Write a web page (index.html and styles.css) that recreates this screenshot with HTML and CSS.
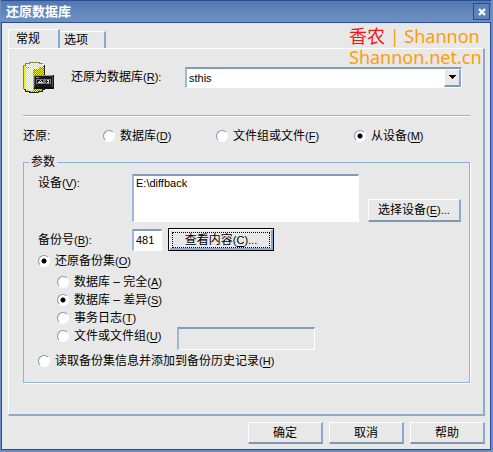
FILE: index.html
```html
<!DOCTYPE html>
<html lang="zh-CN">
<head>
  <meta charset="UTF-8">
  <meta name="viewport" content="width=device-width, initial-scale=1.0">
  <title>还原数据库</title>
  <link rel="stylesheet" href="styles.css">
</head>
<body>
  <div class="window">
    <div class="titlebar">
      <h1>还原数据库</h1>
      <button type="button" class="close" aria-label="关闭">
        <svg width="8" height="8" viewBox="0 0 8 8"><path d="M1 1l6 6M7 1L1 7" stroke="#fff" stroke-width="2.2"/></svg>
      </button>
    </div>

    <form class="client">
      <div class="watermark"><span class="red">香农</span> | Shannon<br>Shannon.net.cn</div>

      <div class="tabs">
        <button type="button" class="tab active">常规</button>
        <button type="button" class="tab">选项</button>
      </div>

      <div class="panel">
        <!-- Target database -->
        <div class="row target">
          <svg class="db-icon" width="32" height="32" viewBox="1 0 32 32" shape-rendering="crispEdges">
            <defs>
              <pattern id="dither" width="2" height="2" patternUnits="userSpaceOnUse">
                <rect width="2" height="2" fill="#f2ee30"/>
                <rect width="1" height="1" fill="#8c8a10"/>
                <rect x="1" y="1" width="1" height="1" fill="#8c8a10"/>
              </pattern>
              <pattern id="light" width="2" height="2" patternUnits="userSpaceOnUse">
                <rect width="2" height="2" fill="#fffff0"/>
                <rect width="1" height="1" fill="#ecea20"/>
                <rect x="1" y="1" width="1" height="1" fill="#ecea20"/>
              </pattern>
            </defs>
            <path d="M1 4h2V2h4V1h10v1h4v2h2v24h-3v2h-4v1H7v-1H3v-2H1z" fill="url(#dither)"/>
            <path d="M2 6h2v22H2z" fill="#f4f010"/>
            <path d="M4 7h7v23H7v-1H4z" fill="url(#light)"/>
            <path d="M3 3h4V2h10v1h4v3h-4v2H7V6H3z" fill="url(#light)"/>
            <path d="M1 28V4h2V2h4V1h10v1h4" fill="none" stroke="#85834a"/>
            <path d="M22 4v10M2 28h1v2h4v1h9v-1h4v-2h2v-1" fill="none" stroke="#222"/>
            <path d="M12 14h20v14H12z" fill="#111"/>
            <path d="M12 14h19v12H12z" fill="#555"/>
            <path d="M13 15h17v11H13z" fill="#161a1c"/>
            <path d="M12 14h18v1H12z" fill="#999"/>
            <path d="M14 16h3v1h-3z" fill="#4ab5b5"/>
            <path d="M14 18h15v5H14z" fill="#777"/>
            <path d="M15 19h13v3H15z" fill="#16191a"/>
            <path d="M16 21h1v-1h1v-1h1v1h1v1h1v1h-5zM25 19h2v3h-2z" fill="#ddd"/>
            <path d="M18 20h1v1h-1zM25 20h1v1h-1z" fill="#111"/>
            <path d="M21 19h3v3h-3z" fill="#777"/>
          </svg>
          <label for="database">还原为数据库<span class="key">(<u>R</u>):</span></label>
          <div class="combo">
            <select id="database"><option>sthis</option></select>
            <span class="arrow"><svg width="7" height="4" viewBox="0 0 7 4" shape-rendering="crispEdges"><path d="M0 0h7v1H6v1H5v1H4v1H3V3H2V2H1V1H0z"/></svg></span>
          </div>
        </div>

        <hr>

        <!-- Restore source -->
        <div class="source" role="radiogroup" aria-labelledby="sourceLabel">
          <span id="sourceLabel">还原:</span>
          <label class="radio"><input type="radio" name="source"><span>数据库<span class="key">(<u>D</u>)</span></span></label>
          <label class="radio"><input type="radio" name="source"><span>文件组或文件<span class="key">(<u>F</u>)</span></span></label>
          <label class="radio"><input type="radio" name="source" checked><span>从设备<span class="key">(<u>M</u>)</span></span></label>
        </div>

        <fieldset>
          <legend>参数</legend>
          <div class="row device">
            <label for="device">设备<span class="key">(<u>V</u>):</span></label>
            <textarea id="device" readonly>E:\diffback</textarea>
            <button type="button" class="btn">选择设备<span class="key">(<u>E</u>)...</span></button>
          </div>
          <div class="row number">
            <label for="backupNo">备份号<span class="key">(<u>B</u>):</span></label>
            <input type="text" id="backupNo" class="field" value="481">
            <button type="button" class="btn default"><span class="focus">查看内容<span class="key">(<u>C</u>)...</span></span></button>
          </div>

          <label class="radio"><input type="radio" name="action" checked><span>还原备份集<span class="key">(<u>O</u>)</span></span></label>
          <div class="sets">
            <label class="radio"><input type="radio" name="set"><span>数据库 – 完全<span class="key">(<u>A</u>)</span></span></label>
            <label class="radio"><input type="radio" name="set" checked><span>数据库 – 差异<span class="key">(<u>S</u>)</span></span></label>
            <label class="radio"><input type="radio" name="set"><span>事务日志<span class="key">(<u>T</u>)</span></span></label>
            <div class="row files">
              <label class="radio"><input type="radio" name="set"><span>文件或文件组<span class="key">(<u>U</u>)</span></span></label>
              <input type="text" class="field" aria-label="文件或文件组" disabled>
            </div>
          </div>
          <label class="radio"><input type="radio" name="action"><span>读取备份集信息并添加到备份历史记录<span class="key">(<u>H</u>)</span></span></label>
        </fieldset>
      </div>

      <div class="actions">
        <button type="button" class="btn">确定</button>
        <button type="button" class="btn">取消</button>
        <button type="button" class="btn">帮助</button>
      </div>
    </form>
  </div>
</body>
</html>
```
FILE: styles.css
```css
* {
  box-sizing: border-box;
}
body {
  margin: 0;
  font-family: "Liberation Sans", "Noto Sans CJK SC", sans-serif;
  font-size: 12px;
  line-height: 18px;
  color: #000;
}
button, input, select, textarea {
  margin: 0;
  font: inherit;
  color: inherit;
  border-radius: 0;
}
.window {
  display: flex;
  flex-direction: column;
  min-height: 100vh;
  border: solid #6b8fc4;
  border-width: 0 2px 2px 1px;
  background-color: #e8e8e8;
}
.titlebar {
  display: flex;
  align-items: center;
  justify-content: space-between;
  height: 23px;
  padding: 0 1px 0 5px;
  border-top: 1px solid #2b4f94;
  border-bottom: 1px solid #2a4b96;
  background: linear-gradient(#5478b2, #6e93c2);
}
.titlebar h1 {
  margin: 0;
  font-size: 13px;
  font-weight: bold;
  color: #fff;
}
.close {
  display: flex;
  align-items: center;
  justify-content: center;
  width: 17px;
  height: 17px;
  padding: 0;
  border: 1px solid #264c94;
  background-color: #5d82b8;
}
.client {
  position: relative;
  flex: 1;
  display: flex;
  flex-direction: column;
  padding: 6px 5px 5px 6px;
  border: solid #2a4b96;
  border-width: 0 1px 1px;
}
.watermark {
  position: absolute;
  top: 3px;
  right: 7px;
  font-family: "Noto Sans", "Noto Sans CJK SC", sans-serif;
  font-size: 18px;
  line-height: 21px;
  width: 134px;
  white-space: nowrap;
  color: #ff9c0a;
  pointer-events: none;
}
.watermark .red {
  color: #f81414;
}

/* Tabs and the page under them */
.tabs {
  display: flex;
  align-items: flex-end;
}
.tab {
  height: 17px;
  padding: 0 16px 0 4px;
  border: solid #fff;
  border-width: 1px 2px 0 0;
  border-right-color: #86a9d4;
  background-color: #e8e8e8;
  line-height: 16px;
}
.tab.active {
  height: 20px;
  margin-bottom: -1px;
  padding: 0 18px 2px 7px;
  border-left: 1px solid #fff;
  border-radius: 2px 0 0 0;
}
.panel {
  flex: 1;
  padding: 12px 13px 31px 14px;
  border: solid #fff;
  border-width: 1px 2px 2px 1px;
  border-right-color: #8faac8;
  border-bottom-color: #8faac8;
}
.row {
  display: flex;
  align-items: center;
}
.key {
  font-size: 11px;
}
u {
  text-underline-offset: 2px;
}
.target {
  padding-right: 8px;
}
.target label {
  width: 114px;
  margin-left: 16px;
}
.db-icon {
  flex: none;
}
.combo {
  position: relative;
  flex: 1;
}
select, textarea, .field {
  border: 1px solid #fff;
  border-top: 2px solid #819bb9;
  border-left: 2px solid #9bb8dc;
  background-color: #fff;
  font-size: 11px;
}
select {
  appearance: none;
  display: block;
  width: 100%;
  height: 21px;
  padding: 0 20px 0 2px;
}
.arrow {
  position: absolute;
  top: 2px;
  right: 1px;
  display: flex;
  align-items: center;
  justify-content: center;
  width: 17px;
  height: 18px;
  border: solid #fff;
  border-width: 1px 2px 2px 1px;
  border-right-color: #86a9d4;
  border-bottom-color: #7f98b5;
  background-color: #e8e8e8;
  pointer-events: none;
}
hr {
  margin: 22px 0 10px;
  border: 0;
  border-top: 1px solid #8fb2da;
  border-bottom: 1px solid #fff;
}
.source {
  display: grid;
  grid-template-columns: 80px 113px 138px auto;
  align-items: center;
}

/* Radio buttons */
.radio {
  display: flex;
  align-items: center;
  gap: 5px;
}
.radio input {
  appearance: none;
  flex: none;
  width: 12px;
  height: 12px;
  border: 1px solid #fff;
  border-top-color: #8098b4;
  border-left-color: #8098b4;
  border-radius: 50%;
  background-color: #fff;
}
.radio input:checked {
  background-image: radial-gradient(circle, #000 2px, transparent 3px);
}

fieldset {
  margin: 8px 0 0;
  padding: 3px 8px 12px 14px;
  border: 1px solid #8fb2da;
  box-shadow: 1px 1px #fff;
}
legend {
  margin-left: -9px;
  padding: 0 2px;
}
.device {
  align-items: flex-start;
}
.device label, .number label {
  width: 94px;
}
.device .btn {
  align-self: flex-end;
  width: 93px;
  margin-left: 9px;
}
textarea {
  flex: 1;
  min-width: 0;
  height: 48px;
  padding: 0 2px;
  line-height: 14px;
  resize: none;
}
.number {
  margin: 6px 0 1px;
}
.field {
  width: 30px;
  height: 22px;
  padding: 0 2px;
}
.files {
  align-items: flex-start;
}
.field:disabled {
  flex: 0 1 138px;
  height: 23px;
  margin-left: 16px;
  background-color: #e8e8e8;
}
.sets {
  margin: 3px 0 2px 19px;
}
.btn {
  height: 23px;
  padding: 0;
  border: solid #fff;
  border-width: 1px 2px 2px 1px;
  border-right-color: #86a9d4;
  border-bottom-color: #8097b2;
  background-color: #e8e8e8;
  line-height: 18px;
}
.btn.default {
  width: 106px;
  margin-left: 6px;
  padding: 2px;
  border-width: 1px;
  border-color: #000;
  box-shadow: inset 1px 1px #fff, inset -2px -2px #86a9d4;
}
.focus {
  display: block;
  height: 16px;
  margin: 0 1px;
  border: 1px dotted #000;
  line-height: 15px;
}
.actions {
  display: flex;
  justify-content: flex-end;
  gap: 6px;
  margin-top: 6px;
}
.actions .btn {
  width: 75px;
  height: 22px;
}
```
